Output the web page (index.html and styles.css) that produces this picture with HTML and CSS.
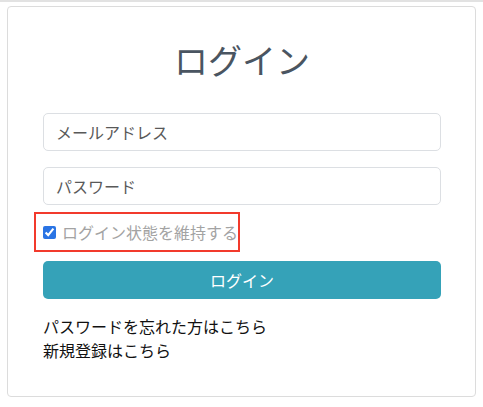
FILE: index.html
```html
<!DOCTYPE html>
<html lang="ja">
<head>
<meta charset="utf-8">
<title>ログイン</title>
<link rel="stylesheet" href="styles.css">
</head>
<body>
<div class="topbar"></div>
<main class="page">
  <section class="card">
    <h1 class="title">ログイン</h1>
    <form class="form">
      <input class="field" type="email" placeholder="メールアドレス">
      <input class="field" type="password" placeholder="パスワード">
      <label class="remember">
        <input class="check" type="checkbox" checked>
        <span class="remember-text">ログイン状態を維持する</span>
      </label>
      <button class="btn" type="button">ログイン</button>
    </form>
    <div class="links">
      <a class="link" href="#">パスワードを忘れた方はこちら</a>
      <a class="link" href="#">新規登録はこちら</a>
    </div>
  </section>
</main>
</body>
</html>
```
FILE: styles.css
```css
* { box-sizing: border-box; }
html, body { margin: 0; padding: 0; background: #fff; }
body {
  font-family: "Noto Sans CJK JP", "Noto Sans", sans-serif;
  font-size: 16px;
  color: #212529;
}
.topbar {
  height: 2px;
  background: #e2e2e2;
}
.page {
  padding: 4px 7px 0 7px;
}
.card {
  width: 469px;
  height: 391px;
  border: 1px solid #dcdcdc;
  border-radius: 4px;
  padding: 0 34px 0 35px;
}
.title {
  margin: 26px 0 0 0;
  text-align: center;
  font-size: 34px;
  font-weight: 400;
  line-height: 54px;
  color: #4a5561;
}
.form {
  display: flex;
  flex-direction: column;
  margin-top: 26px;
}
.field {
  height: 38px;
  width: 100%;
  border: 1px solid #dcdfe3;
  border-radius: 5px;
  padding: 0 12px;
  font-family: inherit;
  font-size: 16px;
  color: #333;
  background: #fff;
  margin-bottom: 16px;
}
.field::placeholder { color: #595959; }
.remember {
  align-self: flex-start;
  display: flex;
  align-items: center;
  height: 40px;
  margin: -9px 0 0 -9px;
  padding: 0 0 0 7px;
  border: 2px solid #f23a2c;
}
.check {
  width: 13px;
  height: 13px;
  margin: 1px 6px 0 0;
  accent-color: #2a74e4;
}
.remember-text {
  color: #a3a3a3;
  line-height: 24px;
}
.btn {
  margin-top: 9px;
  height: 38px;
  width: 100%;
  border: none;
  border-radius: 5px;
  background: #35a2b8;
  color: #fff;
  font-family: inherit;
  font-size: 16px;
}
.links {
  display: flex;
  flex-direction: column;
  margin-top: 15px;
}
.link {
  color: #111;
  text-decoration: none;
  line-height: 24px;
}
```
